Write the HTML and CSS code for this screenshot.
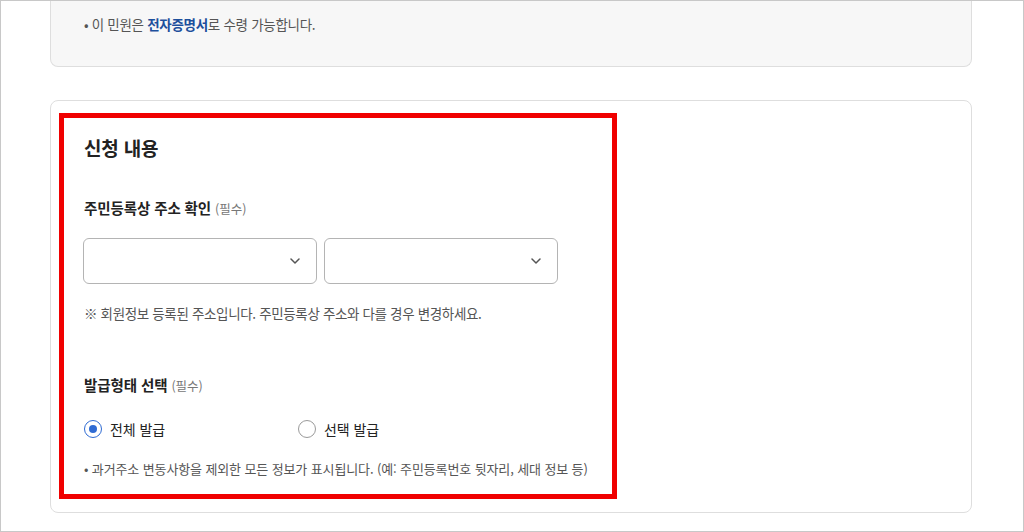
FILE: index.html
```html
<!DOCTYPE html>
<html lang="ko">
<head>
    <meta charset="UTF-8">
    <meta name="viewport" content="width=device-width, initial-scale=1.0">
    <title>신청 내용</title>
    <link rel="stylesheet" href="styles.css">
</head>
<body>
    <div class="frame">
        <div class="page">
            <!-- 수령 안내 -->
            <div class="notice-card">
                <p class="notice-text">• 이 민원은 <strong>전자증명서</strong>로 수령 가능합니다.</p>
            </div>

            <!-- 신청 내용 -->
            <div class="form-card">
                <div class="highlight">
                    <h2 class="section-title">신청 내용</h2>

                    <div class="field-label">주민등록상 주소 확인 <span class="required">(필수)</span></div>
                    <div class="select-row">
                        <div class="select-box">
                            <svg class="chevron" width="10" height="6" viewBox="0 0 10 6"><path d="M1 1l4 4 4-4" fill="none" stroke="#555" stroke-width="1.5" stroke-linecap="round" stroke-linejoin="round"/></svg>
                        </div>
                        <div class="select-box">
                            <svg class="chevron" width="10" height="6" viewBox="0 0 10 6"><path d="M1 1l4 4 4-4" fill="none" stroke="#555" stroke-width="1.5" stroke-linecap="round" stroke-linejoin="round"/></svg>
                        </div>
                    </div>
                    <p class="help-text">※ 회원정보 등록된 주소입니다. 주민등록상 주소와 다를 경우 변경하세요.</p>

                    <div class="field-label second">발급형태 선택 <span class="required">(필수)</span></div>
                    <div class="radio-row">
                        <label class="radio">
                            <span class="radio-mark checked"></span>
                            <span>전체 발급</span>
                        </label>
                        <label class="radio">
                            <span class="radio-mark"></span>
                            <span>선택 발급</span>
                        </label>
                    </div>
                    <p class="foot-text">• 과거주소 변동사항을 제외한 모든 정보가 표시됩니다. (예: 주민등록번호 뒷자리, 세대 정보 등)</p>
                </div>
            </div>
        </div>
    </div>
</body>
</html>
```

FILE: styles.css
```css
/* General Styles */
body {
    margin: 0;
    padding: 0;
    font-family: "Noto Sans CJK KR", "Noto Sans", sans-serif;
    color: #222;
    background-color: #ffffff;
}

p, h2 {
    margin: 0;
}

.frame {
    width: 1024px;
    height: 532px;
    border: 1px solid #c8c8c8;
    box-sizing: border-box;
    overflow: hidden;
}

.page {
    padding: 0 51px 0 49px;
}

/* Notice Card */
.notice-card {
    height: 66px;
    background-color: #f7f7f7;
    border: 1px solid #dedede;
    border-top: none;
    border-radius: 0 0 8px 8px;
    box-sizing: border-box;
    padding: 13px 0 0 33px;
}

.notice-text {
    font-size: 13.5px;
    line-height: 20px;
    color: #555;
    letter-spacing: -0.3px;
}

.notice-text strong {
    color: #1d4f9c;
    font-weight: 700;
}

/* Form Card */
.form-card {
    margin-top: 33px;
    height: 413px;
    border: 1px solid #dedede;
    border-radius: 8px;
    box-sizing: border-box;
    padding: 12px 0 0 8px;
}

.highlight {
    width: 558px;
    height: 386px;
    border: 5px solid #f00000;
    box-sizing: border-box;
    padding: 18px 10px 0 20px;
}

.section-title {
    font-size: 19px;
    line-height: 24px;
    font-weight: 700;
    color: #222;
    letter-spacing: -0.2px;
}

.field-label {
    margin-top: 37px;
    font-size: 14.5px;
    line-height: 22px;
    font-weight: 700;
    color: #222;
    letter-spacing: -0.1px;
}

.field-label.second {
    margin-top: 51px;
}

.required {
    font-size: 12.5px;
    font-weight: 400;
    color: #777;
    letter-spacing: 0;
}

/* Selects */
.select-row {
    display: flex;
    gap: 7px;
    margin-top: 18px;
    margin-left: -1px;
}

.select-box {
    width: 234px;
    height: 46px;
    border: 1px solid #b4b4b4;
    border-radius: 6px;
    box-sizing: border-box;
    display: flex;
    align-items: center;
    justify-content: flex-end;
    padding-right: 16px;
}

.help-text {
    margin-top: 19px;
    font-size: 13.5px;
    line-height: 20px;
    color: #555;
    letter-spacing: -0.35px;
}

/* Radios */
.radio-row {
    display: flex;
    margin-top: 21px;
}

.radio {
    display: flex;
    align-items: center;
    gap: 8px;
    width: 214px;
    font-size: 14px;
    line-height: 22px;
    color: #222;
    letter-spacing: -0.1px;
}

.radio-mark {
    width: 18px;
    height: 18px;
    border: 1px solid #9a9a9a;
    border-radius: 50%;
    box-sizing: border-box;
    position: relative;
}

.radio-mark.checked {
    border-color: #2f6bd3;
}

.radio-mark.checked::after {
    content: "";
    position: absolute;
    left: 4px;
    top: 4px;
    width: 8px;
    height: 8px;
    border-radius: 50%;
    background-color: #2f6bd3;
}

.foot-text {
    margin-top: 19px;
    font-size: 13px;
    line-height: 20px;
    color: #555;
    letter-spacing: -0.12px;
    white-space: nowrap;
}
```
